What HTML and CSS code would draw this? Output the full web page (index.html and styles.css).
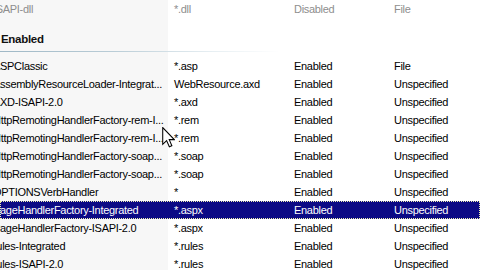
FILE: index.html
```html
<!DOCTYPE html>
<html>
<head>
<meta charset="utf-8">
<link rel="stylesheet" href="styles.css">
</head>
<body>
<div class="list">
  <div class="row dim">
    <div class="c1"><span>ISAPI-dll</span></div>
    <div class="c2">*.dll</div>
    <div class="c3">Disabled</div>
    <div class="c4">File</div>
  </div>
  <div class="group">
    <div class="group-title">Enabled</div>
    <div class="group-line"></div>
  </div>
  <div class="row">
    <div class="c1"><span>ASPClassic</span></div>
    <div class="c2">*.asp</div>
    <div class="c3">Enabled</div>
    <div class="c4">File</div>
  </div>
  <div class="row">
    <div class="c1"><span>AssemblyResourceLoader-Integrat...</span></div>
    <div class="c2">WebResource.axd</div>
    <div class="c3">Enabled</div>
    <div class="c4">Unspecified</div>
  </div>
  <div class="row">
    <div class="c1"><span>AXD-ISAPI-2.0</span></div>
    <div class="c2">*.axd</div>
    <div class="c3">Enabled</div>
    <div class="c4">Unspecified</div>
  </div>
  <div class="row">
    <div class="c1"><span>HttpRemotingHandlerFactory-rem-I...</span></div>
    <div class="c2">*.rem</div>
    <div class="c3">Enabled</div>
    <div class="c4">Unspecified</div>
  </div>
  <div class="row">
    <div class="c1"><span>HttpRemotingHandlerFactory-rem-I...</span></div>
    <div class="c2">*.rem</div>
    <div class="c3">Enabled</div>
    <div class="c4">Unspecified</div>
  </div>
  <div class="row">
    <div class="c1"><span>HttpRemotingHandlerFactory-soap...</span></div>
    <div class="c2">*.soap</div>
    <div class="c3">Enabled</div>
    <div class="c4">Unspecified</div>
  </div>
  <div class="row">
    <div class="c1"><span>HttpRemotingHandlerFactory-soap...</span></div>
    <div class="c2">*.soap</div>
    <div class="c3">Enabled</div>
    <div class="c4">Unspecified</div>
  </div>
  <div class="row">
    <div class="c1"><span>OPTIONSVerbHandler</span></div>
    <div class="c2">*</div>
    <div class="c3">Enabled</div>
    <div class="c4">Unspecified</div>
  </div>
  <div class="row selected">
    <div class="c1"><span>PageHandlerFactory-Integrated</span></div>
    <div class="c2">*.aspx</div>
    <div class="c3">Enabled</div>
    <div class="c4">Unspecified</div>
  </div>
  <div class="row">
    <div class="c1"><span>PageHandlerFactory-ISAPI-2.0</span></div>
    <div class="c2">*.aspx</div>
    <div class="c3">Enabled</div>
    <div class="c4">Unspecified</div>
  </div>
  <div class="row">
    <div class="c1"><span>rules-Integrated</span></div>
    <div class="c2">*.rules</div>
    <div class="c3">Enabled</div>
    <div class="c4">Unspecified</div>
  </div>
  <div class="row">
    <div class="c1"><span>rules-ISAPI-2.0</span></div>
    <div class="c2">*.rules</div>
    <div class="c3">Enabled</div>
    <div class="c4">Unspecified</div>
  </div>
</div>
<svg class="cursor" width="13" height="21" viewBox="0 0 12 20">
  <path d="M0.5 0.5 L0.5 16.5 L4.2 12.9 L6.8 18.8 L9.2 17.8 L6.7 12 L11.5 12 Z" fill="#fff" stroke="#000" stroke-width="1" stroke-linejoin="miter"/>
</svg>
</body>
</html>
```

FILE: styles.css
```css
html, body {
  margin: 0;
  padding: 0;
  background: #fff;
  overflow: hidden;
}
body {
  width: 480px;
  height: 270px;
  position: relative;
  font-family: "Liberation Sans", Arial, sans-serif;
  font-size: 11px;
  letter-spacing: -0.3px;
  color: #000;
}
.list {
  background: linear-gradient(to right, #f7f7f7 168px, #fff 168px);
}
.row {
  display: grid;
  grid-template-columns: 168px 120px 100px 92px;
  height: 18px;
  line-height: 18px;
  white-space: nowrap;
}
.row > div {
  overflow: hidden;
}
.c1 span {
  display: block;
  margin-left: -7px;
}
.c2, .c3, .c4 {
  padding-left: 6px;
}
.dim {
  color: #8e8e8e;
}
.group {
  height: 39px;
  display: flex;
  flex-direction: column;
}
.group-title {
  margin-top: 12px;
  height: 18px;
  line-height: 18px;
  padding-left: 1px;
  font-weight: bold;
  font-size: 11.5px;
  color: #111;
}
.group-line {
  margin-top: 3px;
  height: 1px;
  width: 280px;
  background: linear-gradient(to right, #9fb8c6 0%, #b9ccd6 40%, #e6eef2 75%, rgba(255,255,255,0) 100%);
}
.selected {
  background: #0c0a85;
  color: #fff;
  outline: 1px dotted #f0f0b0;
  outline-offset: -1px;
}
.cursor {
  position: absolute;
  left: 162px;
  top: 127px;
}
```
